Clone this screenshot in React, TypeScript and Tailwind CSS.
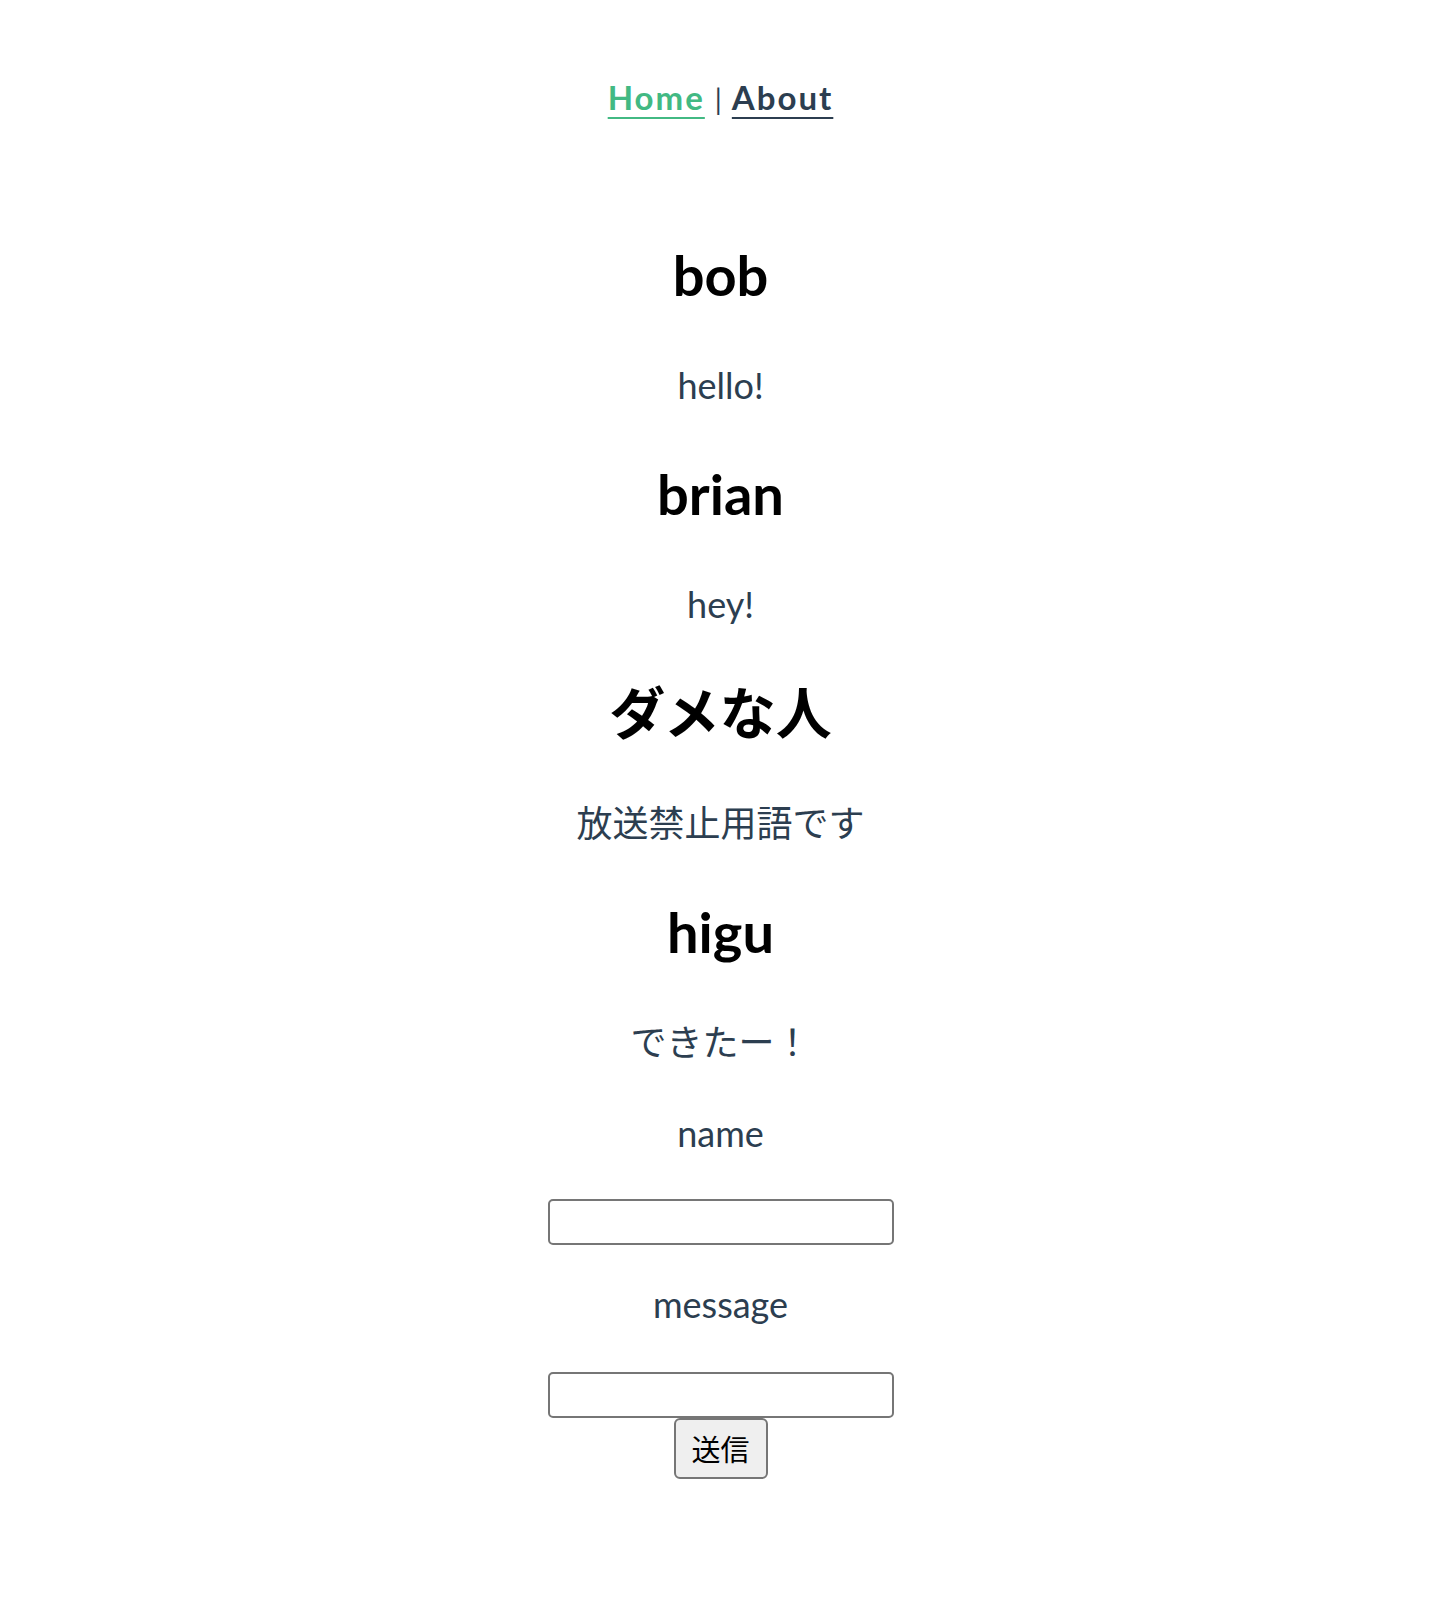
import { useState } from "react";

const posts = [
  { name: "bob", message: "hello!" },
  { name: "brian", message: "hey!" },
  { name: "ダメな人", message: "放送禁止用語です" },
  { name: "higu", message: "できたー！" },
];

export default function App() {
  const [name, setName] = useState("");
  const [message, setMessage] = useState("");

  return (
    <div className="min-h-[1600px] bg-white pl-[10px] text-center text-[#2c3e50] font-['Lato','Noto_Sans_CJK_JP',sans-serif]">
      {/* ===== NAV ===== */}
      <nav className="pt-[77px] text-[33px] leading-[40px] font-bold">
        <a href="#" className="text-[#42b983] tracking-[2px] underline underline-offset-[7px] decoration-[2px]">
          Home
        </a>
        <span className="font-normal text-[28px] mx-[10px]">|</span>
        <a href="#" className="text-[#2c3e50] tracking-[2px] underline underline-offset-[7px] decoration-[2px]">
          About
        </a>
      </nav>

      {/* ===== POSTS ===== */}
      <div className="mt-[128px] flex flex-col items-center">
        {posts.map((post, i) => (
          <div key={i} className={i === 0 ? "" : "mt-[63px]"}>
            <h1 className="text-[56px] leading-[56px] font-bold text-black">{post.name}</h1>
            <p className="mt-[64px] text-[36px] leading-[36px]">{post.message}</p>
          </div>
        ))}
      </div>

      {/* ===== FORM ===== */}
      <form className="mt-[55px] flex flex-col items-center" onSubmit={(e) => e.preventDefault()}>
        <label className="text-[36px] leading-[36px]">name</label>
        <input
          value={name}
          onChange={(e) => setName(e.target.value)}
          className="mt-[48px] w-[346px] h-[46px] border-2 border-[#767676] rounded-[5px] bg-white"
        />
        <label className="mt-[41px] text-[36px] leading-[36px]">message</label>
        <input
          value={message}
          onChange={(e) => setMessage(e.target.value)}
          className="mt-[50px] w-[346px] h-[46px] border-2 border-[#767676] rounded-[5px] bg-white"
        />
        <button
          type="submit"
          className="w-[94px] h-[61px] border-2 border-[#767676] rounded-[6px] bg-[#efefef] text-black text-[29px] font-['Noto_Sans_CJK_JP',sans-serif]"
        >
          送信
        </button>
      </form>
    </div>
  );
}
